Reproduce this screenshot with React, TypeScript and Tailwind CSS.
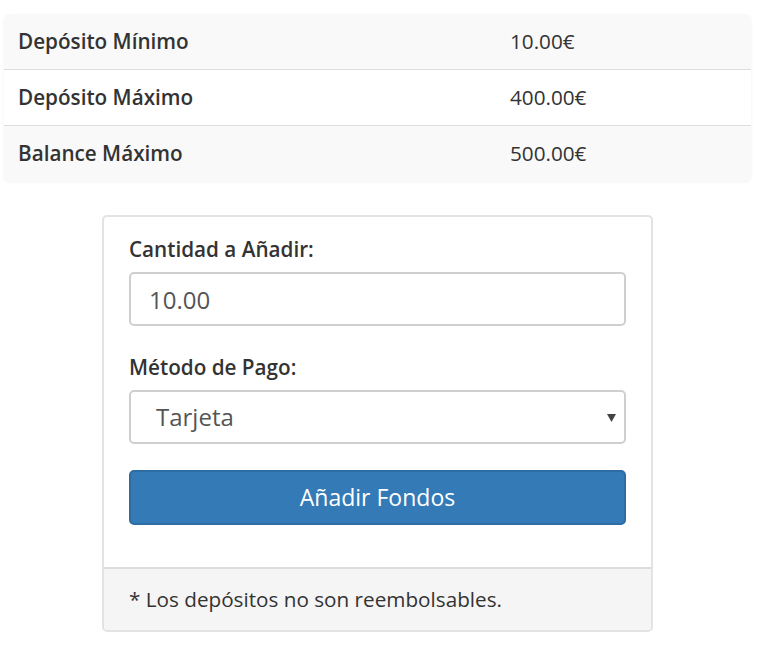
import React from 'react';

const limits = [
  { label: 'Depósito Mínimo', value: '10.00€' },
  { label: 'Depósito Máximo', value: '400.00€' },
  { label: 'Balance Máximo', value: '500.00€' },
];

const App: React.FC = () => {
  return (
    <div
      className="min-h-[661px] bg-white pt-[14px] text-[#333]"
      style={{ fontFamily: '"Open Sans", "Noto Sans", sans-serif' }}
    >
      <div className="ml-[4px] w-[747px]">
        <div className="overflow-hidden rounded-[5px] bg-white shadow-[0_1px_3px_rgba(0,0,0,0.06)]">
          {limits.map((row, i) => (
            <div
              key={row.label}
              className={`flex h-[55px] box-content items-center text-[20.7px] ${i > 0 ? 'border-t border-[#dddddd]' : ''} ${i % 2 === 0 ? 'bg-[#f9f9f9]' : 'bg-white'}`}
            >
              <div className="w-[506px] pl-[14px] font-semibold">{row.label}</div>
              <div>{row.value}</div>
            </div>
          ))}
        </div>

        <div className="mx-auto mt-[34px] w-[551px] overflow-hidden rounded-[5px] border-2 border-[#e3e3e3] bg-white">
          <div className="px-[25px] pt-[19px] pb-[42px]">
            <label className="mb-[10px] block text-[20.7px] leading-[26px] font-semibold">Cantidad a Añadir:</label>
            <input
              readOnly
              value="10.00"
              className="block h-[54px] w-full rounded-[5px] border-2 border-[#cfcfcf] px-[18px] text-[24px] text-[#555] outline-none"
            />

            <label className="mt-[28px] mb-[10px] block text-[20.7px] leading-[26px] font-semibold">Método de Pago:</label>
            <div className="relative">
              <select
                defaultValue="tarjeta"
                className="block h-[54px] w-full appearance-none rounded-[5px] border-2 border-[#cfcfcf] bg-white px-[25px] text-[24px] text-[#555] outline-none"
              >
                <option value="tarjeta">Tarjeta</option>
              </select>
              <svg className="pointer-events-none absolute top-[23px] right-[10px]" width="9" height="9" viewBox="0 0 9 9">
                <path d="M0 1 L9 1 L4.5 9 Z" fill="#444" />
              </svg>
            </div>

            <button className="mt-[26px] block h-[55px] w-full rounded-[5px] border-2 border-[#2e6da4] bg-[#337ab7] text-[23px] text-white">
              Añadir Fondos
            </button>
          </div>
          <div className="flex h-[63px] items-center border-t-2 border-[#dddddd] bg-[#f5f5f5] px-[25px] text-[20.7px]">
            * Los depósitos no son reembolsables.
          </div>
        </div>
      </div>
    </div>
  );
};

export default App;
